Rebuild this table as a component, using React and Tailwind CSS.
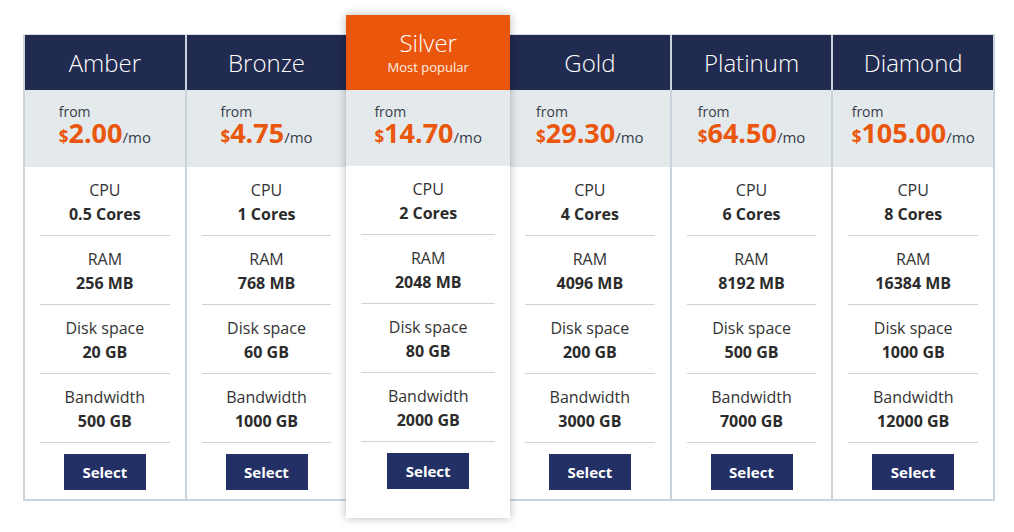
import React from "react";

const plans = [
  { name: "Amber", price: "2.00", cpu: "0.5 Cores", ram: "256 MB", disk: "20 GB", bw: "500 GB" },
  { name: "Bronze", price: "4.75", cpu: "1 Cores", ram: "768 MB", disk: "60 GB", bw: "1000 GB" },
  { name: "Silver", price: "14.70", cpu: "2 Cores", ram: "2048 MB", disk: "80 GB", bw: "2000 GB", popular: true },
  { name: "Gold", price: "29.30", cpu: "4 Cores", ram: "4096 MB", disk: "200 GB", bw: "3000 GB" },
  { name: "Platinum", price: "64.50", cpu: "6 Cores", ram: "8192 MB", disk: "500 GB", bw: "7000 GB" },
  { name: "Diamond", price: "105.00", cpu: "8 Cores", ram: "16384 MB", disk: "1000 GB", bw: "12000 GB" },
];

// 가격 영역 (가운데 정렬된 블록, 내부는 왼쪽 정렬)
function Price({ plan }) {
  return (
    <div className="pt-[13px] flex justify-center text-[#363d4a]">
      <div className="text-left">
        <div className="text-[14px] leading-[18px]">from</div>
        <div className="h-[24px] leading-[24px] whitespace-nowrap">
          <span className="inline-block text-[17px] leading-[20px] font-bold text-[#e9560c]">$</span>
          <span className="inline-block text-[27px] leading-[24px] font-bold text-[#e9560c]">{plan.price}</span>
          <span className="inline-block text-[15px] leading-[20px]">/mo</span>
        </div>
      </div>
    </div>
  );
}

// 스펙 목록 + 선택 버튼
function Specs({ plan }) {
  const rows = [
    ["CPU", plan.cpu],
    ["RAM", plan.ram],
    ["Disk space", plan.disk],
    ["Bandwidth", plan.bw],
  ];
  return (
    <>
      {rows.map(([label, value]) => (
        <div key={label} className="mx-[15px] pt-[11px] pb-[9px] border-b border-[#c9d4dd] text-center">
          <div className="text-[16px] leading-[24px] text-[#333]">{label}</div>
          <div className="text-[16px] leading-[24px] font-bold text-[#2b2b2b]">{value}</div>
        </div>
      ))}
      <div className="pt-[11px] flex justify-center">
        <button className="w-[82px] h-[36px] bg-[#233066] text-white text-[15px] font-bold">
          Select
        </button>
      </div>
    </>
  );
}

function Column({ plan, last }) {
  if (plan.popular) {
    return (
      <div className={`flex-1 ${last ? "" : "border-r-2 border-[#c9d4dd]"}`}>
        <div className="relative z-10 -mt-[20px] -mb-[19px] -mx-[2px] bg-white shadow-[0_0_9px_rgba(0,0,0,0.28)] pb-[29px]">
          <div className="h-[75px] bg-[#e9560c] flex flex-col items-center justify-center text-white">
            <div className="text-[24px] leading-[30px] font-light -mt-[2px]">{plan.name}</div>
            <div className="text-[13px] leading-[18px] text-[#fff1e4]">Most popular</div>
          </div>
          <div className="h-[76px] bg-[#e4e9ec]">
            <Price plan={plan} />
          </div>
          <Specs plan={plan} />
        </div>
      </div>
    );
  }
  return (
    <div className={`flex-1 bg-white ${last ? "" : "border-r-2 border-[#c9d4dd]"}`}>
      <div className="h-[55px] bg-[#212a4f] flex items-center justify-center text-white text-[24px] font-light">
        {plan.name}
      </div>
      <div className="h-[77px] bg-[#e4e9ec]">
        <Price plan={plan} />
      </div>
      <Specs plan={plan} />
    </div>
  );
}

export default function App() {
  return (
    <div className="w-[1014px] h-[532px] bg-white pt-[34px] pl-[23px]" style={{ fontFamily: '"Open Sans", sans-serif' }}>
      <div className="w-[972px] flex border-t border-x-2 border-b-2 border-[#c9d4dd] border-t-[#dbe2e7]">
        {plans.map((plan, i) => (
          <Column key={plan.name} plan={plan} last={i === plans.length - 1} />
        ))}
      </div>
    </div>
  );
}
